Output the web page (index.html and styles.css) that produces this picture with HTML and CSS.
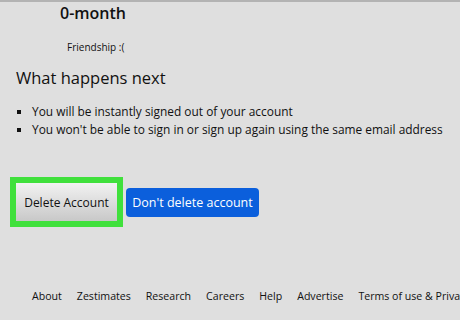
FILE: index.html
```html
<!DOCTYPE html>
<html lang="en">
<head>
  <meta charset="UTF-8" />
  <title>Delete Account</title>
  <link rel="stylesheet" href="styles.css">
</head>
<body>
  <div class="page">
    <div class="plan">
      <div class="plan-title">0-month</div>
      <div class="plan-sub">Friendship :(</div>
    </div>

    <h2 class="next-title">What happens next</h2>
    <ul class="next-list">
      <li>You will be instantly signed out of your account</li>
      <li>You won't be able to sign in or sign up again using the same email address</li>
    </ul>

    <div class="actions">
      <div class="mark">
        <button class="btn-delete">Delete Account</button>
      </div>
      <button class="btn-keep">Don't delete account</button>
    </div>
  </div>

  <div class="footer">
    <a href="#">About</a>
    <a href="#">Zestimates</a>
    <a href="#">Research</a>
    <a href="#">Careers</a>
    <a href="#">Help</a>
    <a href="#">Advertise</a>
    <a href="#">Terms of use &amp; Privacy</a>
  </div>
</body>
</html>
```

FILE: styles.css
```css
* {
  box-sizing: border-box;
}

html, body {
  margin: 0;
  height: 100%;
  overflow: hidden;
}

body {
  background: #dfdfdf;
  border-top: 2px solid #b3b3b3;
  font-family: 'Open Sans', 'Noto Sans', sans-serif;
  color: #111;
}

.page {
  padding: 0 0 0 16px;
}

.plan {
  padding-left: 44px;
}

.plan-title {
  font-size: 16px;
  font-weight: 600;
  line-height: 22px;
}

.plan-sub {
  font-size: 10px;
  line-height: 14px;
  margin-top: 16px;
  padding-left: 7px;
}

.next-title {
  font-size: 16.5px;
  font-weight: 500;
  margin: 13px 0 0;
  line-height: 22px;
}

.next-list {
  margin: 13px 0 0;
  padding-left: 16px;
  list-style: square;
  font-size: 11.9px;
  line-height: 18px;
}

.next-list li::marker {
  font-size: 11px;
}

.actions {
  display: flex;
  align-items: center;
  gap: 3px;
  margin-top: 39px;
  margin-left: -6px;
}

.mark {
  border: 6px solid #40e03c;
  background: #fff;
}

.btn-delete {
  display: block;
  width: 101px;
  height: 38px;
  border: none;
  background: linear-gradient(#f2f2f2, #c8c8c8);
  font-family: inherit;
  font-size: 12px;
  color: #111;
  padding: 0;
}

.btn-keep {
  height: 29px;
  width: 133px;
  border: none;
  border-radius: 4px;
  background: #0b5fdc;
  color: #fff;
  font-family: inherit;
  font-size: 12.5px;
  padding: 0;
}

.footer {
  display: flex;
  gap: 15px;
  padding-left: 32px;
  margin-top: 62px;
  white-space: nowrap;
}

.footer a {
  color: #111;
  text-decoration: none;
  font-size: 10.6px;
}
```
